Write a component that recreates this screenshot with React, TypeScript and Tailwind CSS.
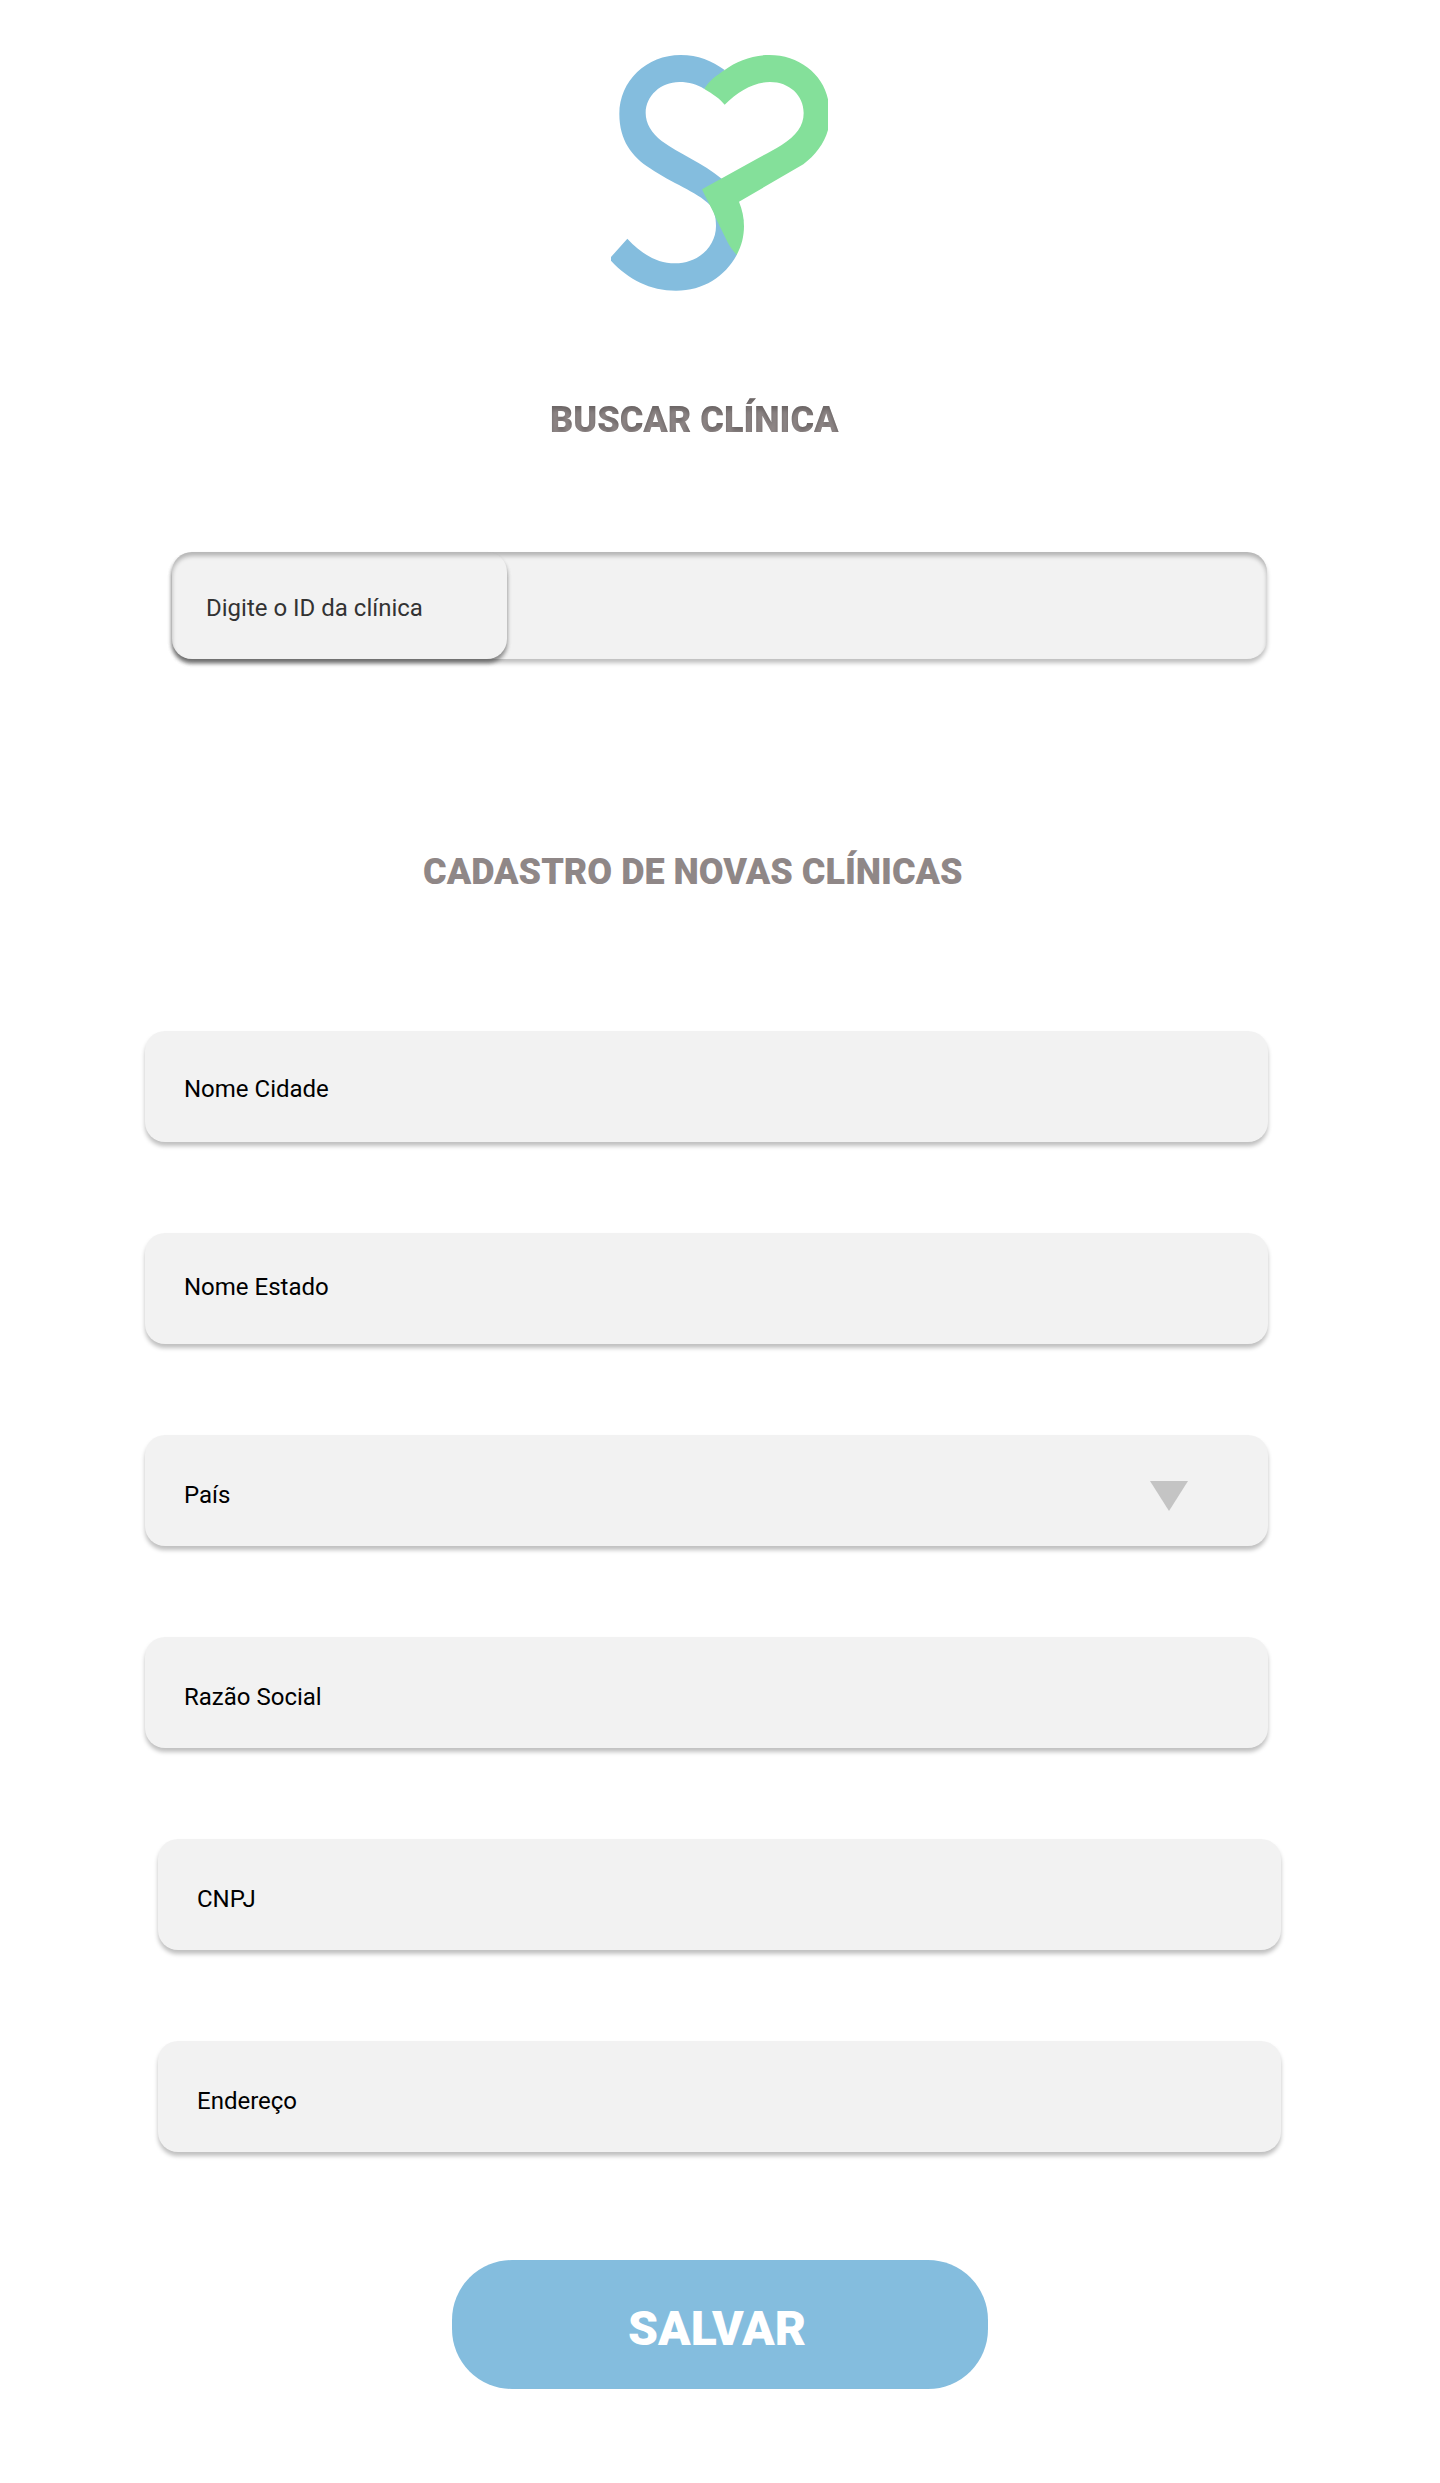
type FieldProps = {
  label: string;
  row?: string;
  text?: string;
  select?: boolean;
};

const field =
  "flex h-[111px] w-[1123px] items-center justify-between rounded-[20px] bg-[#f2f2f2] pr-[79.5px] pl-[39.5px] shadow-[0_4px_4px_rgba(0,0,0,0.25)]";

function Field({ label, row = "ml-[144.5px]", text = "", select }: FieldProps) {
  return (
    <div className={`${field} ${row}`}>
      <span className={`text-[24px] leading-7 text-black ${text}`}>{label}</span>
      {select && (
        <svg className="mt-[11px] h-[30px] w-[38px]" viewBox="0 0 38 30" fill="#c4c4c4">
          <path d="M0 0H38L19 30Z" />
        </svg>
      )}
    </div>
  );
}

function Logo() {
  return (
    <svg className="ml-[611px] h-[236px] w-[217px]" viewBox="63 45 651 708">
      <path
        fill="#84bdde"
        d="M404 90C365 62 325 45 272 45C170 45 88 122 88 222C88 300 125 350 180 385C245 430 320 455 360 495C373 515 378 530 378 558C378 620 325 670 255 670C200 670 155 642 112 596L63 651V662C115 718 180 752 258 752C340 752 405 710 440 645L460 540L395 416C340 370 265 340 215 303C185 280 167 250 167 219C167 168 212 126 268 126C297 126 322 133 343 147Z"
      />
      <path
        fill="#84e09a"
        d="M343 147C370 163 388 175 404 194C445 154 490 126 540 126C598 126 641 166 641 219C641 258 618 288 575 315C550 331 525 343 500 357L336 448C350 480 368 507 380 540L414 609C422 624 431 633 440 645C468 595 468 535 447 485L640 373C675 346 702 312 714 270V178C698 100 625 45 538 45C485 45 440 64 404 90C380 106 355 124 343 147Z"
      />
    </svg>
  );
}

export default function App() {
  return (
    <main className="flex h-[2483px] w-[1440px] flex-col items-start overflow-hidden bg-white pt-[55px] font-['Roboto',sans-serif]">
      <svg className="hidden">
        <filter id="inner-shadow" colorInterpolationFilters="sRGB">
          <feOffset in="SourceAlpha" dy="4" result="moved" />
          <feGaussianBlur in="moved" stdDeviation="2" result="soft" />
          <feComposite in="SourceAlpha" in2="soft" operator="out" result="edge" />
          <feComponentTransfer in="edge" result="shade">
            <feFuncA type="linear" slope="0.25" />
          </feComponentTransfer>
          <feMerge>
            <feMergeNode in="SourceGraphic" />
            <feMergeNode in="shade" />
          </feMerge>
        </filter>
      </svg>

      <Logo />

      <h1 className="mt-[108px] ml-[550px] text-[36px] leading-[42px] font-black whitespace-nowrap text-[#8f8787] [filter:url(#inner-shadow)]">
        BUSCAR CLÍNICA
      </h1>

      <section className="relative mt-[111px] ml-[172px] h-[107px] w-[1095px] rounded-[20px] bg-[#f2f2f2] shadow-[0_4px_4px_rgba(0,0,0,0.25)] after:absolute after:inset-0 after:rounded-[20px] after:shadow-[inset_0_4px_4px_rgba(0,0,0,0.25)] after:content-['']">
        <div className="flex h-[107px] w-[335px] items-center rounded-[20px] bg-[#f2f2f2] pt-[5px] pl-[34px] shadow-[0_4px_4px_rgba(0,0,0,0.25),0_4px_4px_rgba(0,0,0,0.25)]">
          <span className="text-[24px] leading-7 text-[#333333]">Digite o ID da clínica</span>
        </div>
      </section>

      <h2 className="mt-[192px] ml-[423px] text-[36px] leading-[42px] font-black whitespace-nowrap text-[#8f8787]">
        CADASTRO DE NOVAS CLÍNICAS
      </h2>

      <form className="mt-[138px] flex flex-col gap-[91px]">
        <Field label="Nome Cidade" text="mt-1" />
        <Field label="Nome Estado" text="mb-1" />
        <Field label="País" select text="mt-2" />
        <Field label="Razão Social" text="mt-2" />
        <Field label="CNPJ" row="ml-[157.5px]" text="mt-2" />
        <Field label="Endereço" row="ml-[157.5px]" text="mt-2" />
      </form>

      <button className="mt-[108px] ml-[452px] h-[129px] w-[536px] rounded-[60px] bg-[#84bdde] pt-2 pr-[6px] text-[48px] leading-[56px] font-black text-white">
        SALVAR
      </button>
    </main>
  );
}
